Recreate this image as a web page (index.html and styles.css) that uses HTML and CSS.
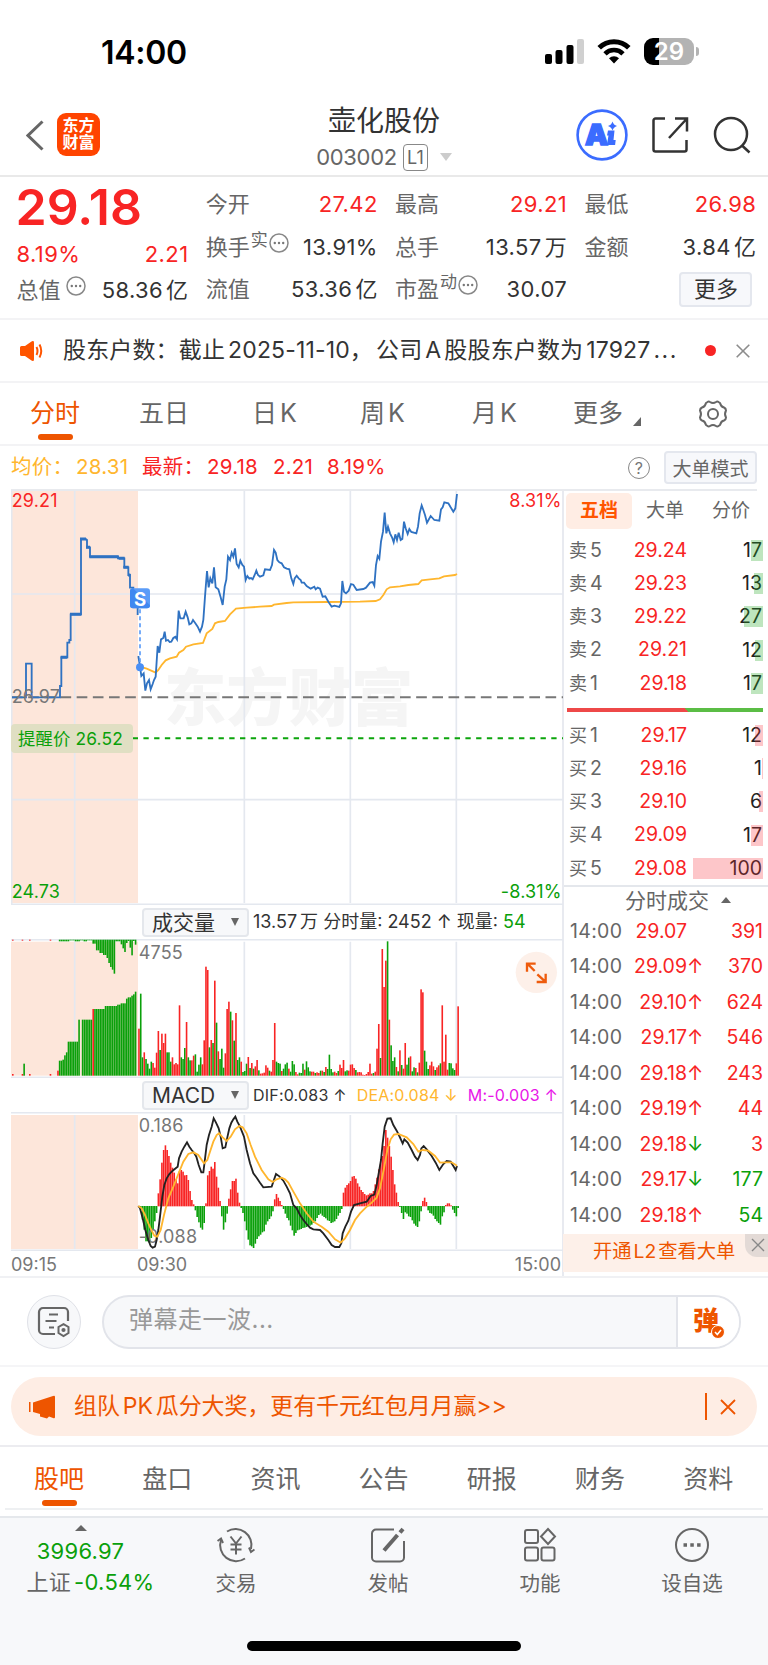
FILE: index.html
```html
<!DOCTYPE html>
<html lang="zh-CN">

<head>
    <meta charset="UTF-8">
    <meta name="viewport" content="width=device-width, initial-scale=1.0">
    <title>壶化股份 003002</title>
    <link rel="stylesheet" href="styles.css">
</head>

<body>
    <div class="status">
        <span class="clock">14:00</span>
        <svg class="signal" width="39" height="25" viewBox="0 0 39 25">
            <rect x="0" y="15" width="7" height="10" rx="2" />
            <rect x="10.5" y="11" width="7" height="14" rx="2" />
            <rect x="21.5" y="6" width="7" height="19" rx="2" />
            <rect x="32" y="0" width="7" height="25" rx="2" fill="#d0d0d0" />
        </svg>
        <svg class="wifi" width="34" height="25" viewBox="0 0 34 25">
            <path d="M2.2 8.8a21 21 0 0 1 29.6 0" fill="none" stroke="#000" stroke-width="5" />
            <path d="M8 14.8a12.7 12.7 0 0 1 18 0" fill="none" stroke="#000" stroke-width="4.6" />
            <path d="M17 24.5l-5-5.2a7.2 7.2 0 0 1 10 0z" />
        </svg>
        <span class="battery"><b>29</b></span>
        <span class="nub"></span>
    </div>

    <header class="header">
        <svg class="back" width="18" height="31" viewBox="0 0 18 31"><path d="M16.5 1.5L2 15.5l14.5 14" fill="none" stroke="#666" stroke-width="3" /></svg>
        <div class="logo">东方<br>财富</div>
        <div class="title">
            <h1>壶化股份</h1>
            <p><span class="code">003002</span><span class="lv">L1</span><i class="caret"></i></p>
        </div>
        <svg class="ai" width="52" height="52" viewBox="0 0 52 52">
            <circle cx="26" cy="26" r="24.4" fill="#fff" stroke="#3b6cff" stroke-width="2.6" />
            <text x="9" y="36" class="ai-text">A</text>
            <path d="M32 21.5h6.500l-1 9.500h2.200l-.6 5h-8.200l1.600-9.500h-1.500z" fill="#3b6cff" />
            <path d="M36.500 12.500q1 3.500 4.500 4.500q-3.500 1-4.500 4.500q-1-3.500-4.500-4.500q3.500-1 4.500-4.500z" fill="#3b6cff" />
        </svg>
        <svg class="share" width="38" height="38" viewBox="0 0 38 38" fill="none" stroke="#333" stroke-width="2.5">
            <path d="M14 2.500H4.500a2 2 0 0 0-2 2v29a2 2 0 0 0 2 2h29a2 2 0 0 0 2-2V24" />
            <path d="M24 2.500h12v13M36 2.500L18 22" />
        </svg>
        <svg class="search" width="38" height="38" viewBox="0 0 38 38" fill="none" stroke="#333" stroke-width="2.5">
            <circle cx="18" cy="18" r="16" />
            <path d="M29 29.500l7.500 7" />
        </svg>
    </header>

    <section class="quote">
        <div class="col first">
            <div class="price">29.18</div>
            <div class="row chg red"><span>8.19%</span><span>2.21</span></div>
            <div class="row"><label>总值<svg class="dots" viewBox="0 0 20 20"><use href="#more" /></svg></label><span>58.36<u>亿</u></span></div>
        </div>
        <div class="col">
            <div class="row"><label>今开</label><span class="red">27.42</span></div>
            <div class="row"><label>换手<sup>实</sup><svg class="dots" viewBox="0 0 20 20"><use href="#more" /></svg></label><span>13.91%</span></div>
            <div class="row"><label>流值</label><span>53.36<u>亿</u></span></div>
        </div>
        <div class="col">
            <div class="row"><label>最高</label><span class="red">29.21</span></div>
            <div class="row"><label>总手</label><span>13.57<u>万</u></span></div>
            <div class="row"><label>市盈<sup>动</sup><svg class="dots" viewBox="0 0 20 20"><use href="#more" /></svg></label><span>30.07</span></div>
        </div>
        <div class="col">
            <div class="row"><label>最低</label><span class="red">26.98</span></div>
            <div class="row"><label>金额</label><span>3.84<u>亿</u></span></div>
            <div class="row end"><button class="btn more">更多</button></div>
        </div>
    </section>

    <section class="notice">
        <svg class="horn" width="24" height="20" viewBox="0 0 24 20">
            <path d="M0 6.500q0-1.500 1.500-1.500H5l6.500-4.500q2.500-1.500 2.500 1.200v16.600q0 2.700-2.500 1.200L5 15H1.500Q0 15 0 13.500z" transform="translate(0 0)" fill="#ff5500" />
            <path d="M16.500 6q2 4 0 8M19.500 3.500q3.500 6.500 0 13" fill="none" stroke="#ff5500" stroke-width="2" />
        </svg>
        <p>股东户数：截止<u>2025-11-10</u>，<u>公司</u><u>A</u><u>股股东户数为</u><u>17927</u><span class="etc">...</span></p>
        <i class="dot"></i>
        <svg width="14" height="14" viewBox="0 0 14 14"><path d="M.7.7l12.600 12.600M13.300.7L.7 13.300" stroke="#8c8c8c" stroke-width="1.6" /></svg>
    </section>

    <nav class="periods">
        <a class="on">分时</a>
        <a>五日</a>
        <a>日<u>K</u></a>
        <a>周<u>K</u></a>
        <a>月<u>K</u></a>
        <a class="drop">更多</a>
        <svg class="gear" width="30" height="30" viewBox="0 0 30 30" fill="none" stroke="#666" stroke-width="2">
            <path d="M9.500 3q1.200-1 2.500 0q3 2 6 0q1.300-1 2.500 0l1.500 1q1 4 4 4.500q2 1 2 3q-2 3.500 0 7q0 2-2 3q-3 .5-4 4.500l-1.500 1q-1.200 1-2.500 0q-3-2-6 0q-1.300 1-2.500 0L8 26q-1-4-4-4.500q-2-1-2-3q2-3.500 0-7q0-2 2-3Q7 8 8 4z" />
            <circle cx="15" cy="15" r="5" />
        </svg>
    </nav>

    <section class="info">
        <span class="avg">均价：<u>28.31</u></span>
        <span class="red last">最新：<u>29.18</u></span>
        <span class="red two">2.21</span>
        <span class="red">8.19%</span>
        <i class="help">?</i>
        <button class="btn mode">大单模式</button>
    </section>

    <main class="market">
        <div class="charts">
            <!-- all chart canvases share one x scale: 3 units per pixel -->
            <svg class="price-chart" viewBox="33 27 1656 1248">
                <rect x="33" y="33" width="381" height="1236" fill="#fde6da" />
                <text x="492" y="722" class="mark">东方财富</text>
                <path class="grid" d="M224 33V1269M733 33V1269M1051 33V1269M1369 33V1269M33 342H1689M33 959H1689M33 1273H1689M35 27V1273" />
                <path d="M36 652H1689" stroke="#777" stroke-width="6" stroke-dasharray="32 16.500" />
                <path d="M398 775H1689" stroke="#0ca50c" stroke-width="6" stroke-dasharray="16 16.200" />
                <rect x="33" y="732" width="366" height="87" rx="12" fill="#e0dfc3" />
                <text x="54" y="795" class="t green remind">提醒价 26.52</text>
                <polyline class="yellow" points="420,560 440,566 467,578 475,570 485,555 497,541 510,535 530,530 537,518 550,510 558,500 580,493 609,489 620,460 637,447 645,430 655,426 675,423 690,403 708,386 740,383 780,380 815,378 822,374 860,369 880,367 980,366 1080,365 1127,363 1140,358 1150,345 1160,328 1170,322 1200,319 1225,315 1255,312 1265,301 1290,298 1318,295 1332,289 1365,285 1371,282" />
                <path class="blue" d="M36 652H78V551H95V652H180V618H184V532H202V488H208V480H212V403H243V177H257L261 180V202H270V230H354V235H373V262H385V285H390V323H400V345H413V405" />
                <path class="blue thick" d="M268 230H356M356 235H374M210 403H244M182 532H202M240 177H258M258 202H270M370 262H386M384 285H391" />
                <polyline class="blue" points="415,528 420,560 424,588 431,580 436,632 441,610 447,600 452,628 458,612 462,600 467,590 473,498 478,518 483,478 490,474 494,455 498,482 504,480 509,486 514,485 520,474 526,470 531,478 536,392 541,415 551,415 557,395 563,412 568,433 574,430 579,420 586,430 593,440 600,455 606,440 610,420 615,350 621,273 626,322 631,295 637,310 642,262 647,322 655,328 662,352 668,375 674,320 679,298 684,230 690,240 695,218 700,230 705,205 710,252 716,262 721,242 727,255 732,260 737,300 742,288 748,296 753,294 758,298 764,285 769,272 774,285 780,290 790,286 795,268 810,270 816,255 822,210 827,218 832,240 838,247 845,250 852,262 860,266 868,268 874,295 880,312 884,295 890,287 896,295 902,300 905,308 912,308 920,318 932,326 943,320 947,328 953,323 960,326 968,350 976,349 985,365 995,380 1003,377 1018,381 1023,370 1027,303 1032,335 1038,340 1046,332 1053,312 1060,314 1070,330 1090,327 1098,323 1110,308 1118,306 1123,317 1128,255 1133,228 1138,236 1143,185 1149,155 1154,98 1159,160 1164,140 1170,160 1176,172 1181,187 1186,163 1191,180 1196,158 1202,180 1207,177 1212,125 1217,145 1223,162 1228,147 1234,156 1249,160 1254,140 1259,100 1265,76 1270,90 1275,105 1281,128 1292,108 1303,120 1318,122 1323,88 1328,82 1333,67 1345,70 1352,82 1360,95 1366,85 1371,42" />
                <path d="M420 388V550" stroke="#5b9cf8" stroke-width="5" stroke-dasharray="12 9" />
                <circle cx="420" cy="562" r="12" fill="#4a8ff5" />
                <rect x="390" y="325" width="60" height="60" rx="9" fill="#5b9cf8" />
                <path d="M390 334q0-9 9-9l51 51q0 9-9 9h-42q-9 0-9-9z" fill="#4088f0" />
                <text x="420" y="377" class="s">S</text>
                <text x="35" y="80" class="t red">29.21</text>
                <text x="35" y="668" class="t gray">26.97</text>
                <text x="35" y="1254" class="t green">24.73</text>
                <text x="1685" y="80" class="t red r">8.31%</text>
                <text x="1685" y="1254" class="t green r">-8.31%</text>
            </svg>

            <div class="sub-head">
                <span class="select">成交量<i></i></span>
                <span>13.57<u>万</u> 分时量: 2452 ↑ 现量: <b class="green">54</b></span>
            </div>
            <svg class="vol-chart" viewBox="33 118 1656 417">
                <rect x="33" y="126" width="381" height="402" fill="#fde6da" />
                <path class="grid" d="M224 126V528M733 126V528M1051 126V528M1369 126V528M33 120H1689M33 533H1689" />
                <g id="auction"></g>
                <g id="volume"></g>
                <text x="416" y="178" class="t gray">4755</text>
                <circle cx="1609" cy="218" r="62" fill="#fdf0e9" />
                <path d="M1604 214l-22-22M1581 216v-24h26M1612 224l24 22M1637 222v25h-27" fill="none" stroke="#ee5b0c" stroke-width="7" />
            </svg>

            <div class="sub-head macd">
                <span class="select">MACD<i></i></span>
                <span>DIF:0.083 ↑</span>
                <span class="dea">DEA:0.084 ↓</span>
                <span class="m">M:-0.003 ↑</span>
            </div>
            <svg class="macd-chart" viewBox="33 636 1656 417">
                <rect x="33" y="645" width="381" height="402" fill="#fde6da" />
                <path class="grid" d="M224 645V1047M733 645V1047M1051 645V1047M1369 645V1047M33 638H1689M33 1051H1689" />
                <g id="hist"></g>
                <text x="416" y="696" class="t gray">0.186</text>
                <text x="416" y="1028" class="t gray">-0.088</text>
                <polyline class="black" points="415,918 420,925 428,955 436,990 445,1020 452,1038 458,1043 465,1040 470,1020 475,990 480,950 487,890 493,855 500,835 508,822 518,812 528,804 533,800 537,775 545,755 553,740 561,727 568,740 575,750 582,758 589,770 596,795 604,817 610,817 614,785 620,735 627,705 635,680 641,655 648,668 656,685 662,710 668,745 676,742 682,712 688,685 694,668 700,658 706,650 712,665 720,680 732,710 740,750 750,790 760,820 770,833 780,848 790,862 815,860 828,822 838,829 850,842 860,860 870,880 880,915 890,925 900,945 910,960 920,972 930,983 940,988 960,990 970,1000 985,1020 995,1035 1005,1041 1018,1041 1024,1030 1028,1000 1036,980 1045,962 1053,935 1062,915 1080,910 1100,905 1112,888 1123,884 1130,855 1137,815 1143,780 1148,730 1154,680 1162,656 1172,655 1180,675 1190,692 1198,708 1208,730 1213,718 1223,728 1235,750 1245,770 1253,780 1260,765 1264,745 1271,738 1280,748 1295,768 1307,788 1318,810 1330,792 1340,783 1352,785 1360,798 1367,810 1371,798" />
                <polyline class="yellow" points="415,918 425,925 435,945 445,970 455,992 463,1007 472,1010 482,990 492,945 505,895 520,860 535,822 550,785 565,762 580,757 595,765 612,790 622,780 630,755 640,725 650,705 657,700 668,712 680,723 692,710 705,688 718,678 728,682 740,700 752,735 765,770 785,810 805,838 818,846 830,838 845,833 855,838 865,848 880,875 900,910 920,940 940,965 965,980 985,995 1005,1018 1022,1028 1035,1015 1050,990 1065,960 1080,940 1098,922 1115,908 1130,893 1140,865 1152,805 1162,750 1172,718 1182,704 1195,702 1220,712 1240,732 1255,755 1268,750 1285,752 1305,768 1320,788 1335,787 1355,787 1371,797" />
            </svg>
            <div class="axis"><span>09:15</span><span class="open">09:30</span><span class="close">15:00</span></div>
        </div>

        <aside class="book">
            <div class="tabs"><a class="on">五档</a><a>大单</a><a>分价</a></div>
            <ul class="depth sell">
                <li><span>卖<u>5</u></span><b>29.24</b><em>17<i style="width:12px"></i></em></li>
                <li><span>卖<u>4</u></span><b>29.23</b><em>13<i style="width:9px"></i></em></li>
                <li><span>卖<u>3</u></span><b>29.22</b><em>27<i style="width:19px"></i></em></li>
                <li><span>卖<u>2</u></span><b>29.21</b><em>12<i style="width:8px"></i></em></li>
                <li><span>卖<u>1</u></span><b>29.18</b><em>17<i style="width:12px"></i></em></li>
            </ul>
            <div class="ratio"></div>
            <ul class="depth buy">
                <li><span>买<u>1</u></span><b>29.17</b><em>12<i style="width:8px"></i></em></li>
                <li><span>买<u>2</u></span><b>29.16</b><em>1<i style="width:1px"></i></em></li>
                <li><span>买<u>3</u></span><b>29.10</b><em>6<i style="width:4px"></i></em></li>
                <li><span>买<u>4</u></span><b>29.09</b><em>17<i style="width:12px"></i></em></li>
                <li><span>买<u>5</u></span><b>29.08</b><em>100<i style="width:70px"></i></em></li>
            </ul>
            <div class="deals-head">分时成交<i></i></div>
            <ul class="deals">
                <li><span>14:00</span><b>29.07</b><s></s><em class="red">391</em></li>
                <li><span>14:00</span><b>29.09</b><s class="red">↑</s><em class="red">370</em></li>
                <li><span>14:00</span><b>29.10</b><s class="red">↑</s><em class="red">624</em></li>
                <li><span>14:00</span><b>29.17</b><s class="red">↑</s><em class="red">546</em></li>
                <li><span>14:00</span><b>29.18</b><s class="red">↑</s><em class="red">243</em></li>
                <li><span>14:00</span><b>29.19</b><s class="red">↑</s><em class="red">44</em></li>
                <li><span>14:00</span><b>29.18</b><s class="green">↓</s><em class="red">3</em></li>
                <li><span>14:00</span><b>29.17</b><s class="green">↓</s><em class="green">177</em></li>
                <li><span>14:00</span><b>29.18</b><s class="red">↑</s><em class="green">54</em></li>
            </ul>
            <div class="promo">开通<u>L2</u><u>查看大单</u>
                <span class="x"><svg width="14" height="14" viewBox="0 0 14 14"><path d="M1 1l12 12M13 1L1 13" stroke="#888" stroke-width="1.4" /></svg></span>
            </div>
        </aside>
    </main>

    <section class="danmu">
        <div class="round">
            <svg width="34" height="32" viewBox="0 0 34 32" fill="none" stroke="#666" stroke-width="2.2">
                <path d="M31 15V6a4 4 0 0 0-4-4H6a4 4 0 0 0-4 4v18a4 4 0 0 0 4 4h12" />
                <path d="M12 8.500h9M8.500 15h11M12 21.500h5" />
                <path d="M26.500 18.200l5 2.800v6l-5 3l-5-3v-6z" stroke-width="2" />
                <circle cx="26.500" cy="24" r="1" />
            </svg>
        </div>
        <div class="field">
            <span>弹幕走一波...</span>
            <div class="send">弹<svg width="14" height="14" viewBox="0 0 14 14"><circle cx="7" cy="7" r="6.500" fill="#ee5500" stroke="#fff" /><path d="M4 7l2.300 2.500L10 5" fill="none" stroke="#fff" stroke-width="1.600" /></svg></div>
        </div>
    </section>

    <section class="banner-wrap">
        <div class="banner">
            <svg width="28" height="24" viewBox="0 0 28 24" fill="#ee5500">
                <path d="M1 7h1.500v10H1zM5 7.500L25 1q2-1 2 1v20q0 2-2 1l-4-1.500l-2 2l-7-2v-2.500L5 17z" />
            </svg>
            <p>组队<u>PK</u><u>瓜分大奖，更有千元红包月月赢&gt;&gt;</u></p>
            <i class="sep"></i>
            <svg width="16" height="16" viewBox="0 0 16 16"><path d="M1 1l14 14M15 1L1 15" stroke="#ee5500" stroke-width="1.800" /></svg>
        </div>
    </section>

    <nav class="sections">
        <a class="on">股吧</a><a>盘口</a><a>资讯</a><a>公告</a><a>研报</a><a>财务</a><a>资料</a>
    </nav>

    <footer class="bottom">
        <div class="index">
            <i></i>
            <b class="green">3996.97</b>
            <span>上证<u class="green">-0.54%</u></span>
        </div>
        <div class="item">
            <svg viewBox="0 0 38 36">
                <path d="M10 4.500A16 16 0 0 1 34 22M28 31.500A16 16 0 0 1 4 13" />
                <path d="M.500 14L4 11.500l2 4.500M37.500 22.500l-3.500 2.500l-2-4.500" />
                <path d="M13.500 9.500l5.500 7l5.500-7M19 16.500v11M13.500 17.500h11M13.500 22.500h11" />
            </svg>
            <span>交易</span>
        </div>
        <div class="item">
            <svg viewBox="0 0 38 36">
                <path d="M25 2.500H7a4 4 0 0 0-4 4v24a4 4 0 0 0 4 4h24a4 4 0 0 0 4-4V14" />
                <path d="M15 23.500L28.500 8" stroke-width="4" />
                <path d="M31 5.500l3-3.500" stroke-width="4" />
            </svg>
            <span>发帖</span>
        </div>
        <div class="item">
            <svg viewBox="0 0 38 36">
                <rect x="4" y="3" width="13" height="13" rx="2" />
                <rect x="4" y="20.500" width="13" height="13" rx="2" />
                <rect x="20.500" y="20.500" width="13" height="13" rx="2" />
                <path d="M27 2l7 7.500l-7 7.500l-7-7.500z" />
            </svg>
            <span>功能</span>
        </div>
        <div class="item">
            <svg viewBox="0 0 38 36">
                <circle cx="19" cy="18" r="16" />
                <path d="M10.500 18h3.500M17.300 18h3.500M24.100 18h3.500" stroke-width="3.500" />
            </svg>
            <span>设自选</span>
        </div>
        <div class="home"></div>
    </footer>

    <svg class="defs">
        <symbol id="more" viewBox="0 0 20 20">
            <circle cx="10" cy="10" r="9" fill="none" stroke="#888" stroke-width="1.500" />
            <circle cx="5.800" cy="10" r="1.200" fill="#777" />
            <circle cx="10" cy="10" r="1.200" fill="#777" />
            <circle cx="14.200" cy="10" r="1.200" fill="#777" />
        </symbol>
    </svg>

    <script src="chart.js"></script>
</body>

</html>
```
FILE: styles.css
```css
* {
    box-sizing: border-box;
}

body {
    width: 768px;
    height: 1665px;
    margin: 0;
    overflow: hidden;
    background: #fff;
    color: #333;
    font-family: Inter, "Noto Sans CJK SC", sans-serif;
    font-size: 22px;
    line-height: 1;
    white-space: nowrap;
}

h1, p, ul {
    margin: 0;
    padding: 0;
}

i, em {
    font-style: normal;
}

/* u: mixed script run, gets a small gap in front */
u {
    text-decoration: none;
    margin-left: 3px;
}

s {
    text-decoration: none;
}

svg {
    display: block;
    flex: none;
}

.red {
    color: #f82424;
    fill: #f82424;
}

.green {
    color: #0aa00a;
    fill: #0aa00a;
}

.defs {
    width: 0;
    height: 0;
}

/* status bar */
.status {
    display: flex;
    align-items: center;
    height: 95px;
    padding: 8px 69px 0 101px;
}

.clock {
    flex: 1;
    padding-top: 2px;
    color: #000;
    font-size: 32px;
    font-weight: 600;
    letter-spacing: -0.3px;
}

.wifi {
    margin: 0 13px;
}

.battery {
    width: 50px;
    height: 27px;
    border-radius: 9px;
    background: linear-gradient(90deg, #000 15px, #b3b3b3 15px);
    color: #fff;
    font-size: 24px;
    line-height: 27px;
    text-align: center;
}

.battery b {
    font-weight: 600;
}

.nub {
    width: 3px;
    height: 9px;
    margin-left: 2px;
    border-radius: 0 3px 3px 0;
    background: #b3b3b3;
}

/* header */
.header {
    display: flex;
    align-items: center;
    height: 82px;
    padding: 0 17px 0 26px;
    border-bottom: 2px solid #e9e9e9;
}

.logo {
    width: 43px;
    height: 43px;
    margin: -1px 0 0 13px;
    padding-top: 4px;
    border-radius: 9px;
    background: #ff4400;
    color: #fff;
    font-size: 16px;
    font-weight: 700;
    line-height: 17px;
    text-align: center;
}

.title {
    flex: 1;
    padding: 6px 0 0 92px;
    text-align: center;
}

.title h1 {
    height: 35px;
    font-size: 28px;
    font-weight: 400;
    line-height: 32px;
}

.title p {
    display: flex;
    align-items: center;
    justify-content: center;
    height: 28px;
    margin-top: 3px;
    color: #666;
}

.code {
    font-size: 22px;
    letter-spacing: -0.3px;
}

.lv {
    width: 25px;
    height: 27px;
    margin: 0 12px 0 6px;
    border: 1.5px solid #888;
    border-radius: 4px;
    font-size: 18px;
    line-height: 25px;
    text-align: center;
}

.caret {
    border: 6px solid transparent;
    border-top: 8px solid #ccc;
    border-bottom: 0;
}

.share {
    margin: 0 24px 0 23px;
}

.ai-text {
    fill: #3b6cff;
    stroke: #3b6cff;
    stroke-width: 1.5px;
    font-size: 29px;
    font-weight: 900;
}

/* quote */
.quote {
    display: grid;
    grid-template-columns: repeat(4, 172px);
    gap: 17.3px;
    height: 143px;
    padding: 6px 12px 0 16.5px;
    border-bottom: 2px solid #f3f3f5;
}

.row {
    display: flex;
    align-items: center;
    justify-content: space-between;
    height: 42.5px;
    letter-spacing: 0.4px;
}

.row label {
    display: flex;
    align-items: center;
    color: #666;
    letter-spacing: 0;
}

.row sup {
    font-size: 17px;
    line-height: 17px;
    margin: -13px 1px 0 1px;
    vertical-align: baseline;
}

.dots {
    width: 20px;
    height: 20px;
    margin-top: -8px;
}

.first .dots {
    margin-left: 5px;
}

.price {
    height: 49px;
    color: #f82424;
    font-size: 50px;
    font-weight: 600;
    line-height: 49px;
    letter-spacing: 0;
    margin-left: -1px;
}

.first .chg {
    height: 44px;
}

.first .row:last-child {
    height: 28px;
}

.row.end {
    justify-content: flex-end;
    padding-right: 4px;
}

.btn {
    padding: 0;
    border: 2px solid #e4e7ee;
    border-radius: 4px;
    background: #f7f8fb;
    font-family: inherit;
}

.more {
    width: 73px;
    height: 35px;
    color: #333;
    font-size: 22px;
    line-height: 30px;
}

/* notice */
.notice {
    display: flex;
    align-items: center;
    height: 63px;
    padding: 0 18px 0 20px;
    border-bottom: 2px solid #f3f3f5;
    font-size: 23px;
}

.notice p {
    flex: 1;
    margin-left: 19px;
    letter-spacing: 0.15px;
}

.etc {
    margin-left: 3px;
    letter-spacing: 1.5px;
}

.dot {
    width: 11px;
    height: 11px;
    margin-right: 20px;
    border-radius: 50%;
    background: #f82424;
}

/* period tabs */
.periods {
    display: flex;
    position: relative;
    align-items: center;
    height: 63px;
    padding-left: 30px;
    border-bottom: 2px solid #f3f3f5;
    color: #666;
    font-size: 25px;
}

.periods a {
    position: relative;
    width: 109px;
}

.periods a:nth-child(2) {
    width: 113px;
}

.periods a:nth-child(3) {
    width: 108px;
}

.periods a:nth-child(4) {
    width: 112px;
}

.periods a:nth-child(5) {
    width: 101px;
}

.periods .drop {
    width: 125px;
}

.periods .drop::after {
    content: "";
    position: absolute;
    left: 60px;
    bottom: 0;
    border-left: 8px solid transparent;
    border-bottom: 9px solid #666;
}

.periods .on,
.sections .on {
    color: #ee5500;
}

.periods .on::after,
.sections .on::after {
    content: "";
    position: absolute;
    left: 8px;
    top: 33px;
    width: 35px;
    height: 6px;
    border-radius: 3px;
    background: #ee5500;
}

/* info line */
.info {
    display: flex;
    align-items: center;
    height: 43px;
    padding: 0 11px;
    font-size: 20.5px;
    letter-spacing: 0.2px;
}

.avg {
    width: 131px;
    color: #ffb62e;
}

.last {
    width: 131px;
}

.two {
    width: 54px;
}

.help {
    width: 22px;
    height: 22px;
    margin: 0 14px 0 auto;
    border: 1.5px solid #888;
    border-radius: 50%;
    color: #777;
    font-size: 16px;
    line-height: 20px;
    text-align: center;
}

.mode {
    width: 93px;
    height: 33px;
    color: #666;
    font-size: 19px;
}

/* charts */
.market {
    display: flex;
    position: relative;
    height: 789px;
    border-bottom: 2px solid #f0f1f4;
}

.market::before {
    content: "";
    position: absolute;
    left: 11px;
    top: 0;
    width: 746px;
    height: 2px;
    background: #e8eaee;
}

.charts {
    width: 553px;
    margin-left: 11px;
    border-right: 2px solid #e8eaf0;
}

.charts svg {
    width: 552px;
}

.price-chart {
    height: 416px;
}

.grid {
    stroke: #e4e8ef;
    stroke-width: 5;
}

.mark {
    fill: #f5f5f5;
    font-size: 187px;
    font-weight: 900;
}

.t {
    font-size: 54px;
    letter-spacing: 0.5px;
}

.remind {
    font-size: 52px;
}

.gray {
    fill: #777;
}

.r {
    text-anchor: end;
}

.s {
    fill: #fff;
    font-size: 56px;
    font-weight: 700;
    text-anchor: middle;
}

.blue, .yellow, .black {
    fill: none;
    stroke-width: 5.5;
}

.blue {
    stroke: #2f72c2;
}

.thick {
    stroke-width: 9;
}

.yellow {
    stroke: #ffb62e;
}

.black {
    stroke: #222;
}

.sub-head {
    display: flex;
    align-items: center;
    height: 34px;
    padding-left: 131px;
    font-size: 18px;
}

.sub-head b {
    font-weight: 400;
}

.select {
    display: flex;
    align-items: center;
    justify-content: space-between;
    width: 107px;
    height: 29px;
    margin-right: 4px;
    padding: 0 8px;
    border: 2px solid #e4e7ec;
    border-radius: 4px;
    background: #f7f8fa;
    font-size: 21px;
}

.select i {
    border: 4px solid transparent;
    border-top: 8px solid #666;
    border-bottom: 0;
}

.vol-chart,
.macd-chart {
    height: 139px;
}

.sub-head.macd {
    font-size: 16px;
    letter-spacing: 0.2px;
}

.macd .select {
    letter-spacing: 0;
}

.dea {
    margin-left: 10px;
    color: #ffb62e;
}

.m {
    margin-left: 10px;
    color: #e815e8;
}

.axis {
    display: flex;
    height: 25px;
    color: #777;
    font-size: 18px;
    line-height: 28px;
}

.open {
    margin-left: 80px;
}

.close {
    margin: 0 1px 0 auto;
}

/* order book */
.book {
    width: 204px;
    padding-top: 4px;
    color: #666;
}

.book ul {
    list-style: none;
}

.book b {
    color: #f82424;
    font-weight: 400;
}

.tabs {
    display: flex;
    gap: 0;
    padding-left: 2px;
    font-size: 19px;
    line-height: 36px;
    text-align: center;
}

.tabs a {
    width: 66px;
}

.tabs .on {
    border-radius: 5px;
    background: #ffede4;
    color: #ff5500;
    font-weight: 700;
}

.depth li {
    display: flex;
    align-items: center;
    height: 33.2px;
    padding: 0 5px 0 5px;
    font-size: 19.5px;
}

.sell {
    padding-top: 5px;
}

.depth span {
    width: 40px;
    font-size: 18px;
}

.depth u {
    font-size: 19.5px;
}

.depth b {
    width: 78px;
    text-align: right;
}

.depth em {
    position: relative;
    flex: 1;
    padding-right: 1px;
    color: #222;
    line-height: 21px;
    text-align: right;
}

.depth i {
    position: absolute;
    right: 0;
    top: 0;
    height: 21px;
    background: rgba(40, 170, 40, 0.3);
}

.buy i {
    background: rgba(248, 50, 60, 0.28);
}

.ratio {
    height: 4px;
    margin: 8px 5px 7px 3px;
    background: linear-gradient(45deg, #ee4848 61%, #5bbd45 61%);
}

.deals-head {
    display: flex;
    align-items: center;
    height: 29px;
    padding-left: 61px;
    border-top: 2px solid #e4e7ec;
    font-size: 21px;
}

.deals-head i {
    margin-left: 12px;
    border: 5px solid transparent;
    border-bottom: 6px solid #666;
    border-top: 0;
}

.deals li {
    display: flex;
    align-items: center;
    height: 35.5px;
    padding: 0 5px 0 6px;
    font-size: 19.5px;
}

.deals span {
    width: 54px;
    letter-spacing: 0.3px;
}

.deals b {
    width: 63px;
    text-align: right;
}

.deals s {
    width: 14px;
}

.deals em {
    flex: 1;
    text-align: right;
}

.promo {
    position: relative;
    height: 38px;
    margin: 1px 0 0 -1px;
    padding-left: 30px;
    background: #fdf0e9;
    color: #ee5500;
    font-size: 19.3px;
    line-height: 35px;
}

.promo u {
    margin-left: 2px;
}

.promo .x {
    position: absolute;
    right: 0;
    top: 0;
    width: 23px;
    height: 23px;
    padding: 4px 0 0 6px;
    border-radius: 0 0 0 12px;
    background: #e3dad6;
}

/* danmu input */
.danmu {
    display: flex;
    height: 89px;
    padding: 17px 27px 0;
    border-bottom: 2px solid #f5f5f7;
}

.round {
    display: flex;
    align-items: center;
    justify-content: center;
    width: 54px;
    height: 54px;
    border: 1.5px solid #dfe1e7;
    border-radius: 50%;
    background: #f7f8fa;
}

.field {
    display: flex;
    width: 639px;
    height: 54px;
    margin-left: 21px;
    overflow: hidden;
    border: 2px solid #e2e4ea;
    border-radius: 27px;
    background: #f7f8fa;
    color: #999;
    font-size: 24px;
    line-height: 46px;
}

.field span {
    flex: 1;
    padding-left: 25px;
    letter-spacing: 0.5px;
}

.send {
    position: relative;
    width: 63px;
    padding-left: 15px;
    border-left: 2px solid #e2e4ea;
    background: #fff;
    color: #ee5500;
    font-size: 26px;
    font-weight: 900;
    line-height: 48px;
}

.send svg {
    position: absolute;
    left: 33px;
    top: 28px;
}

/* banner */
.banner-wrap {
    height: 80px;
    padding: 10px 11px;
    border-bottom: 2px solid #ececf0;
}

.banner {
    display: flex;
    align-items: center;
    height: 59px;
    padding: 0 21px 0 17px;
    border-radius: 30px;
    background: #feede4;
    color: #ee5500;
    font-size: 23px;
}

.banner p {
    flex: 1;
    margin-left: 18px;
    letter-spacing: -0.1px;
}

.sep {
    width: 2px;
    height: 27px;
    margin-right: 13px;
    background: #ee5500;
}

/* section tabs */
.sections {
    display: flex;
    align-items: center;
    height: 63px;
    margin: 0 5px;
    padding: 3px 0 0 29px;
    border-bottom: 2px solid #eef0f2;
    color: #666;
    font-size: 25px;
}

.sections a {
    position: relative;
    flex: 0 0 108.2px;
}

/* bottom bar */
.bottom {
    display: grid;
    grid-template-columns: 160px repeat(4, 152px);
    position: relative;
    height: 149px;
    margin-top: 6px;
    border-top: 2px solid #e5e8ec;
    background: #f7f8fa;
    color: #666;
}

.index {
    display: flex;
    flex-direction: column;
    align-items: center;
    padding: 7px 0 0 1px;
    gap: 9px;
    letter-spacing: 0.3px;
}

.index i {
    border: 6px solid transparent;
    border-bottom: 6px solid #666;
    border-top: 0;
}

.index b {
    font-weight: 400;
    line-height: 22px;
}

.index span {
    margin-left: 20px;
    line-height: 22px;
}

.item {
    display: flex;
    flex-direction: column;
    align-items: center;
    padding-top: 9px;
    font-size: 20.5px;
}

.item svg {
    width: 38px;
    height: 36px;
    margin-bottom: 11px;
    fill: none;
    stroke: #666;
    stroke-width: 2;
}

.home {
    position: absolute;
    left: 247px;
    bottom: 14px;
    width: 274px;
    height: 10px;
    border-radius: 5px;
    background: #000;
}
```
FILE: chart.js
```js
const RED = '#f82424';
const GREEN = '#0aa00a';

// one value per minute, positive = up, negative = down
const volume = [
    141, -246, -55, 70, -50, -36, -21, -42, 38, 24, 69, 134, -77, 126, 98, 126, -70, -70, -42, 55,
    34, 38, 34, 211, -55, -50, -83, 161, -55, -46, 46, 60, -64, -12, -33, -55, 34, 106, 327, 317,
    -85, 107, -98, 285, -159, 73, -50, -81, -24, 67, 200, 222, -192, 166, -105, 188, -47, -55, 42, -11,
    -14, -36, 56, -23, 38, -21, 28, 47, -16, 6, 7, 9, 31, 24, -15, 12, 47, 158, -42, -38,
    -36, 14, -21, -34, -39, 21, -12, -44, -34, 11, 4, -9, -8, -36, 18, -43, -25, -13, 12, 12,
    -8, 10, 8, -15, 15, -11, 26, -20, -63, -20, -10, 12, 8, -14, 33, 23, 47, -13, -16, 15,
    33, 34, 23, -17, 10, 11, 10, 3, 2, 5, 11, 36, 6, -8, 12, 81, 155, -53, 380, 266,
    345, -403, 168, -91, -44, -55, 26, -13, 76, -32, 21, 98, -33, -54, 58, -13, -25, 23, -10, 39,
    259, 250, -75, -42, -20, 31, 42, 28, -17, 25, 31, -37, 211, 42, 123, 18, -38, -37, -22, -17,
    37, 208
];

const hist = [
    0, -10, -40, -70, -105, -105, -110, -95, -70, -45, -20, 38, 80, 130, 168, 182, 168, 150, 130, 115,
    100, 80, 68, 105, 108, 103, 92, 93, 78, 45, 18, 5, -12, -32, -48, -64, -70, -50, 8, 92,
    105, 118, 112, 132, 88, 55, 15, -30, -70, -48, -22, 22, 50, 75, 75, 82, 40, 10, -5, -20,
    -45, -72, -100, -117, -120, -125, -112, -98, -90, -85, -78, -75, -55, -45, -38, -30, -15, 20, 36, 25,
    15, 3, -8, -22, -35, -42, -58, -72, -88, -80, -72, -70, -68, -65, -64, -62, -60, -58, -55, -50,
    -45, -35, -26, -22, -28, -32, -36, -42, -44, -50, -48, -45, -38, -28, -20, -8, 40, 55, 63, 68,
    75, 88, 90, 82, 68, 58, 48, 42, 36, 32, 34, 38, 38, 45, 65, 85, 110, 125, 150, 180,
    228, 205, 180, 148, 108, 65, 40, 12, -2, -20, -38, -18, -22, -30, -32, -42, -52, -58, -62, -45,
    -15, 15, 25, 12, -12, -20, -22, -28, -38, -45, -50, -55, -30, -18, 3, 8, 8, 2, -10, -20,
    -30, -5
];

function bar(x, y, h, color) {
    return `<rect x="${x.toFixed(1)}" y="${y}" width="4.800" height="${h}" fill="${color}"/>`;
}

function xAt(i, count) {
    return 414.5 + i * (1372 - 414.5) / (count - 1);
}

document.getElementById('volume').innerHTML = volume.map((v, i) => {
    const h = Math.abs(v);
    return bar(xAt(i, volume.length), 528 - h, h, v > 0 ? RED : GREEN);
}).join('');

document.getElementById('hist').innerHTML = hist.map((v, i) => {
    return bar(xAt(i, hist.length), v > 0 ? 918 - v : 918, Math.abs(v) + 1, v > 0 ? RED : GREEN);
}).join('');

// call auction: matched volume grows from the bottom, unmatched hangs from the top
const matched = [
    [178, 45], [189, 48], [194, 61], [199, 70], [205, 102], [235, 168], [278, 200],
    [315, 209], [350, 213], [363, 217], [375, 231], [385, 235], [395, 240], [401, 244], [406, 252]
];
const unmatched = [
    [178, 5], [207, 2], [222, 5], [240, 2], [250, 5], [260, 2], [278, 12], [286, 32], [297, 40], [307, 46],
    [319, 55], [325, 70], [331, 82], [337, 90], [342, 102], [347, 5], [360, 14], [365, 26],
    [370, 37], [375, 10], [380, 4], [388, 24], [393, 47], [398, 4], [403, 15], [409, 0]
];

function level(steps, x) {
    return steps.filter(s => s[0] <= x + 2).pop()[1];
}

let auction = '';
for (let x = 176.5; x < 408; x += 5.3) {
    if (x < 239 || x > 243) {
        const h = level(matched, x);
        const color = x > 272 && x < 277.5 ? RED : GREEN;
        auction += bar(x, 528 - h, h, color);
    }
    auction += bar(x, 120, level(unmatched, x), GREEN);
}
[36, 65, 87, 149].forEach(x => {
    auction += bar(x, 523, 5, RED) + bar(x, 120, 3, RED);
});
auction += bar(70, 492, 36, GREEN) + bar(171.5, 513, 15, RED);
document.getElementById('auction').innerHTML = auction;
```
